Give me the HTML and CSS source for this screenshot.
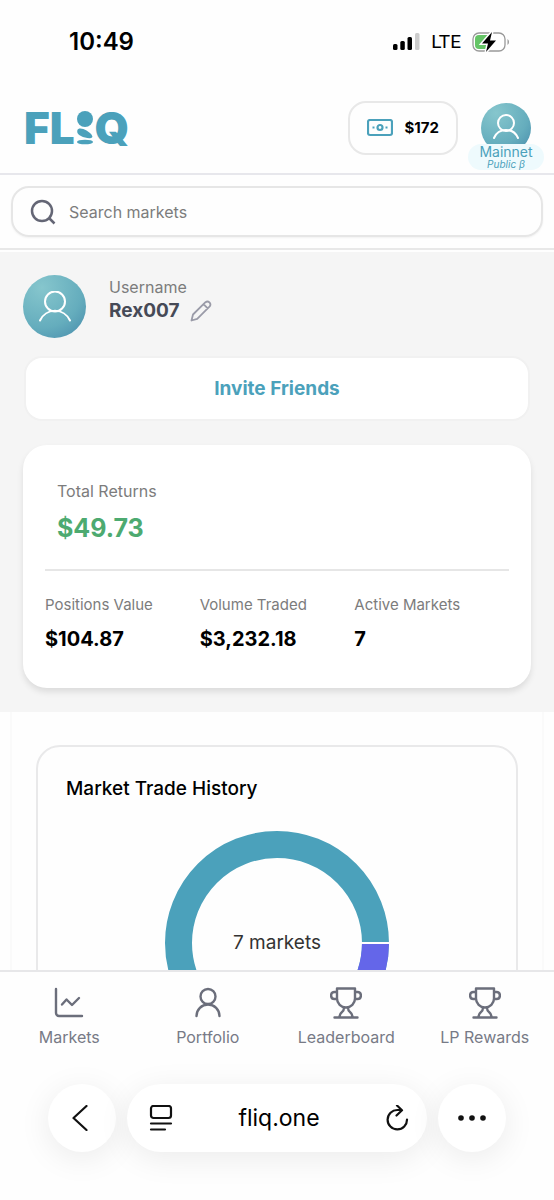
FILE: index.html
```html
<!DOCTYPE html>
<html lang="en">
<head>
<meta charset="utf-8">
<meta name="viewport" content="width=device-width, initial-scale=1">
<title>Fliq - Portfolio</title>
<link rel="stylesheet" href="styles.css">
</head>

<body>

<div class="status">
<span class="time">10:49</span>
<div class="signals">
<svg width="27" height="18" viewBox="0 0 27 18">
<rect x="0" y="11" width="4.500" height="6" rx="1.500"/>
<rect x="7.300" y="8" width="4.500" height="9" rx="1.500"/>
<rect x="14.500" y="4" width="4.500" height="13" rx="1.500"/>
<rect x="22" y="0" width="4.500" height="17" rx="1.500" fill="#ccc"/>
</svg>
<span class="carrier">LTE</span>
<svg width="38" height="20" viewBox="0 0 38 20">
<rect x="1" y="1" width="32" height="18" rx="6" fill="#fff" stroke="#999" stroke-width="1.300"/>
<path d="M7 3h11v14H7a4 4 0 0 1-4-4V7a4 4 0 0 1 4-4z" fill="#65c466"/>
<path d="M35.500 7v6q1.500-1 1.500-3t-1.500-3z" fill="#999"/>
<path d="M20 0 10 11.500h6L14 20 24 8.500h-6z" fill="#000" stroke="#fff" stroke-width="3" paint-order="stroke"/>
</svg>
</div>
</div>

<header>
<a class="logo" href="#" aria-label="FLIQ">
<span>FL</span>
<svg width="16" height="34" viewBox="0 0 16 34">
<circle cx="8" cy="8" r="8"/>
<path d="M0.300 19.500C1 16.500 6 17.500 9.500 19.500S16.500 25 15 26.500 7.500 27 4 25 0 21.500 0.300 19.500z"/>
<ellipse cx="8" cy="31" rx="8" ry="2.300"/>
</svg>
<span>Q</span>
</a>
<div class="account">
<button class="wallet" type="button">
<svg width="26" height="18" viewBox="0 0 26 18" fill="none" stroke="#4ba1bb" stroke-width="2.200">
<rect x="1" y="1" width="24" height="15" rx="2"/>
<circle cx="13" cy="8.500" r="2.500"/>
<path d="M5.500 8.500h2M18.500 8.500h2"/>
</svg>
$172
</button>
<div class="profile">
<a class="avatar small" href="#" aria-label="Profile">
<svg viewBox="0 0 32 32"><circle cx="16" cy="11" r="8"/><path d="M4 26a13 13 0 0 1 24 0"/></svg>
</a>
<div class="network">Mainnet<em>Public β</em></div>
</div>
</div>
</header>

<div class="searchbar">
<label class="search">
<svg width="26" height="26" viewBox="0 0 26 26" fill="none" stroke="#646675" stroke-width="2.500"><circle cx="12" cy="12" r="10"/><path d="M19 19l5.500 5.500"/></svg>
<input type="search" placeholder="Search markets" aria-label="Search markets">
</label>
</div>

<main>
<section class="summary">
<div class="user">
<div class="avatar">
<svg viewBox="0 0 32 32"><circle cx="16" cy="10.500" r="10"/><path d="M1 29.500a16.500 16.500 0 0 1 30 0"/></svg>
</div>
<div>
<div class="label">Username</div>
<div class="name">Rex007
<button class="edit" type="button" aria-label="Edit username">
<svg width="22" height="22" viewBox="0 0 22 22" fill="none" stroke="#9a9ba8" stroke-width="1.800" stroke-linejoin="round"><path d="M1.500 20.500l1.500-6L15.500 2.200a3 3 0 0 1 4.200 4.200L7.200 18.800zM13.500 4.200l4.200 4.200"/></svg>
</button>
</div>
</div>
</div>

<button class="invite" type="button">Invite Friends</button>

<div class="returns">
<div class="total">
<div class="label">Total Returns</div>
<div class="amount">$49.73</div>
</div>
<dl>
<div><dt>Positions Value</dt><dd>$104.87</dd></div>
<div><dt>Volume Traded</dt><dd>$3,232.18</dd></div>
<div><dt>Active Markets</dt><dd>7</dd></div>
</dl>
</div>
</section>

<section class="history">
<div class="chart-card">
<h2>Market Trade History</h2>
<svg class="donut" width="224" height="224" viewBox="0 0 224 224">
<circle cx="112" cy="112" r="98.500" fill="none" stroke="#4ba1bb" stroke-width="27"/>
<path d="M210.500 112A98.500 98.500 0 0 1 112 210.500" fill="none" stroke="#6466e9" stroke-width="27"/>
<path d="M196 112h28M112 196v28" stroke="#fff" stroke-width="2"/>
<text x="112" y="118" text-anchor="middle">7 markets</text>
</svg>
</div>
</section>
</main>

<nav>
<a href="#">
<svg viewBox="0 0 32 32"><path d="M3 2v24a3 3 0 0 0 3 3h23M9 17.500l4.500-5 5.500 5.500 7-7"/></svg>
Markets</a>
<a href="#">
<svg viewBox="0 0 32 32"><circle cx="16" cy="9.500" r="7.500"/><path d="M4.500 29a11.500 11.500 0 0 1 23 0"/></svg>
Portfolio</a>
<a href="#">
<svg viewBox="0 0 32 32"><path d="M7 1.500h18v10a9 9 0 0 1-18 0zM7 5H4.500C0 5 0 12 4.500 12H7M25 5h2.500c4.500 0 4.500 7 0 7H25M14 20.500q0 3-2 4.500t-2.500 4.500M18 20.500q0 3 2 4.500t2.500 4.500M4.500 30.500h23"/></svg>
Leaderboard</a>
<a href="#">
<svg viewBox="0 0 32 32"><path d="M7 1.500h18v10a9 9 0 0 1-18 0zM7 5H4.500C0 5 0 12 4.500 12H7M25 5h2.500c4.500 0 4.500 7 0 7H25M14 20.500q0 3-2 4.500t-2.500 4.500M18 20.500q0 3 2 4.500t2.500 4.500M4.500 30.500h23"/></svg>
LP Rewards</a>
</nav>

<div class="browser">
<button class="round" type="button" aria-label="Back">
<svg width="20" height="26" viewBox="0 0 20 26"><path d="M14.500 1 1.500 13l13 12"/></svg>
</button>
<div class="address">
<button type="button" aria-label="Page menu">
<svg width="24" height="26" viewBox="0 0 24 26"><rect x="2" y="1" width="20" height="12" rx="2.500"/><path d="M2 18.500h20M2 24.500h14"/></svg>
</button>
<span>fliq.one</span>
<button type="button" aria-label="Reload">
<svg width="24" height="26" viewBox="0 0 24 26"><path d="M22 14.500A9.700 9.700 0 1 1 12.500 5h4M12 0.500l5 4.700L11.500 10.500"/></svg>
</button>
</div>
<button class="round" type="button" aria-label="More">
<svg class="dots" width="28" height="6" viewBox="0 0 28 6"><circle cx="3" cy="3" r="2.800"/><circle cx="14" cy="3" r="2.800"/><circle cx="25" cy="3" r="2.800"/></svg>
</button>
</div>

</body>
</html>
```

FILE: styles.css
```css
* {
 box-sizing: border-box;
}

body {
 margin: 0;
 height: 100vh;
 display: flex;
 flex-direction: column;
 overflow: hidden;
 background-color: #fefefe;
 color: #000;
 font-family: Inter, "Liberation Sans", sans-serif;
 font-size: 16px;
 line-height: 24px;
}

button {
 padding: 0;
 border: 0;
 background: none;
 color: inherit;
 font: inherit;
}

a {
 color: inherit;
 text-decoration: none;
}

svg {
 display: block;
 flex: none;
}

/* phone status bar */
.status {
 height: 82px;
 flex: none;
 padding: 1px 44px 0 69px;
 display: flex;
 align-items: center;
 justify-content: space-between;
}

.time {
 font-size: 24px;
 font-weight: 600;
}

.signals {
 display: flex;
 align-items: center;
 gap: 11px;
}

.carrier {
 font-family: Roboto, sans-serif;
 font-size: 19px;
}

/* header */
header {
 height: 93px;
 flex: none;
 padding: 0 23px 0 24px;
 display: flex;
 align-items: center;
 justify-content: space-between;
 border-bottom: 2px solid #e7e7ec;
}

.logo {
 display: flex;
 align-items: center;
 gap: 2px;
 color: #4ba1bb;
 fill: #4ba1bb;
 font-size: 44px;
 font-weight: 900;
 line-height: 44px;
}

.account {
 display: flex;
 align-items: center;
 gap: 23px;
}

.wallet {
 height: 54px;
 padding: 0 17px;
 display: flex;
 align-items: center;
 gap: 12px;
 border: 2px solid #e8e8e8;
 border-radius: 18px;
 font-size: 15px;
 font-weight: 700;
}

.profile {
 position: relative;
}

.avatar {
 width: 63px;
 height: 63px;
 flex: none;
 display: flex;
 align-items: center;
 justify-content: center;
 border-radius: 50%;
 background: radial-gradient(circle at 30% 20%, #86c6cd, #65adbd 60%, #4589aa);
}

.avatar svg {
 width: 32px;
 height: 32px;
 fill: none;
 stroke: #fff;
 stroke-width: 2;
 stroke-linecap: round;
}

.small {
 width: 50px;
 height: 50px;
}

.network {
 position: absolute;
 left: 50%;
 bottom: -17px;
 width: 76px;
 margin-left: -38px;
 padding-bottom: 1px;
 border-radius: 13px;
 background-color: #eefafd;
 color: #4ba1bb;
 font-size: 14px;
 line-height: 15px;
 text-align: center;
}

.network em {
 display: block;
 font-size: 10px;
 line-height: 10px;
}

/* search */
.searchbar {
 flex: none;
 padding: 11px;
 border-bottom: 2px solid #e8e8e8;
}

.search {
 height: 51px;
 padding: 0 17px;
 display: flex;
 align-items: center;
 gap: 13px;
 border: 2px solid #e6e6e6;
 border-radius: 18px;
 box-shadow: 0 1px 2px rgba(0, 0, 0, .05);
}

.search input {
 flex: 1;
 min-width: 0;
 padding: 0;
 border: 0;
 outline: 0;
 background: none;
 font: inherit;
}

.search input::placeholder {
 color: #7c7c7c;
}

/* content */
main {
 flex: 1;
 min-height: 0;
 overflow-y: auto;
 scrollbar-width: none;
 padding-top: 2px;
}

.summary {
 padding: 23px 23px 24px;
 background-color: #f5f5f5;
}

.user {
 display: flex;
 align-items: center;
 gap: 23px;
}

.label {
 color: #7c7c7c;
}

.user .label {
 margin-top: -15px;
}

.name {
 display: flex;
 align-items: center;
 gap: 10px;
 color: #464a57;
 font-size: 19px;
 font-weight: 700;
}

.invite {
 width: calc(100% - 2px);
 height: 65px;
 margin: 18px 1px 24px;
 border: 2px solid #f1f1f1;
 border-radius: 18px;
 background-color: #fff;
 color: #4ba1bb;
 font-size: 19px;
 font-weight: 700;
}

.returns {
 padding: 34px 22px 37px;
 border-radius: 24px;
 background-color: #fff;
 box-shadow: 0 4px 6px rgba(0, 0, 0, .1);
}

.total {
 padding: 0 12px 24px;
 border-bottom: 2px solid #e6e6e6;
}

.amount {
 margin-top: 8px;
 color: #4daa70;
 font-size: 25px;
 font-weight: 700;
 line-height: 34px;
}

.returns dl {
 margin: 22px 0 0;
 display: grid;
 grid-template-columns: repeat(3, 1fr);
}

.returns dt {
 color: #7c7c7c;
 font-size: 15px;
}

.returns dd {
 margin: 10px 0 0;
 font-size: 20px;
 font-weight: 700;
}

.history {
 margin: 0 10px;
 padding: 33px 24px;
 border: solid #fafafa;
 border-width: 0 2px;
}

.chart-card {
 padding: 30px 28px;
 border: 2px solid #e9e9ea;
 border-radius: 24px;
}

h2 {
 margin: 0;
 font-size: 19px;
 font-weight: 500;
 line-height: 24px;
}

.donut {
 margin: 30px auto 0;
}

.donut text {
 fill: #333;
 font-size: 19px;
}

/* tabs */
nav {
 flex: none;
 height: 90px;
 padding-top: 15px;
 display: grid;
 grid-template-columns: repeat(4, 1fr);
 border-top: 2px solid #e7e7e9;
 background-color: #fefefe;
 color: #777a86;
}

nav a {
 display: flex;
 flex-direction: column;
 align-items: center;
 gap: 6px;
 font-weight: 400;
 white-space: nowrap;
}

nav svg {
 width: 32px;
 height: 32px;
 fill: none;
 stroke: #6b6e7b;
 stroke-width: 2.4;
 stroke-linecap: round;
 stroke-linejoin: round;
}

/* browser toolbar */
.browser {
 flex: none;
 padding: 24px 48px 48px;
 display: flex;
 gap: 11px;
}

.round,
.address {
 height: 68px;
 display: flex;
 align-items: center;
 border-radius: 34px;
 background-color: #fff;
 box-shadow: 0 6px 32px rgba(0, 0, 0, .08);
}

.round {
 width: 68px;
 flex: none;
 justify-content: center;
}

.address {
 flex: 1;
 padding: 0 18px 0 22px;
 justify-content: space-between;
 font-size: 23px;
}

.browser svg {
 fill: none;
 stroke: #111;
 stroke-width: 2.2;
 stroke-linecap: round;
 stroke-linejoin: round;
}

.browser .dots {
 fill: #111;
 stroke: none;
}
```
